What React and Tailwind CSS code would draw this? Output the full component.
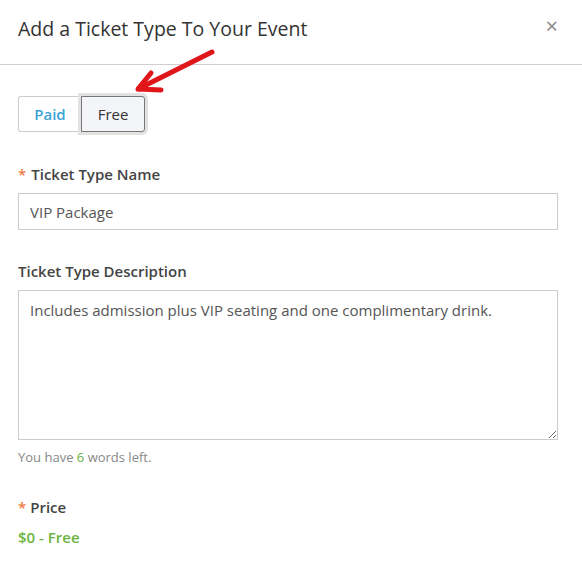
import { useState } from 'react'

export default function App() {
  const [type, setType] = useState('free')
  const [name, setName] = useState('VIP Package')
  const [desc, setDesc] = useState('Includes admission plus VIP seating and one complimentary drink.')

  return (
    <div className="relative w-[582px] h-[579px] bg-white text-[#333] font-['Open_Sans',sans-serif]">
      {/* header */}
      <div className="h-[65px] flex items-center justify-between pl-[18px] pr-[24px] border-b border-[#cfcfcf]">
        <h1 className="text-[19.5px] leading-[26px] text-[#333] -mt-[6px]">Add a Ticket Type To Your Event</h1>
        <button className="text-[22px] leading-none text-[#888] -mt-[14px]">×</button>
      </div>

      {/* pointer arrow */}
      <svg className="absolute left-[130px] top-[46px]" width="92" height="52" viewBox="0 0 92 52">
        <path d="M82 6 L14 40" stroke="#e0161b" strokeWidth="5" strokeLinecap="round" fill="none" />
        <path d="M8 43 L21 27 M8 43 L31 44" stroke="#e0161b" strokeWidth="5" strokeLinecap="round" fill="none" />
      </svg>

      <div className="px-[18px] pt-[31px]">
        {/* paid / free toggle */}
        <div className="flex">
          <button onClick={() => setType('paid')}
            className="w-[63px] h-[36px] rounded-l-[3px] border border-r-0 border-[#ccc] bg-white text-[15px] font-semibold text-[#3aa3d6]">
            Paid
          </button>
          <button onClick={() => setType('free')}
            className="w-[64px] h-[36px] rounded-r-[3px] border border-[#777] bg-[#f3f5f8] text-[15px] text-[#333] shadow-[0_0_0_3px_#e2e2e2]">
            Free
          </button>
        </div>

        {/* name */}
        <label className="block mt-[32px] text-[15px] leading-[20px] font-semibold text-[#444]">
          <span className="text-[#f07a3e] mr-[5px]">*</span>Ticket Type Name
        </label>
        <input value={name} onChange={e => setName(e.target.value)}
          className="mt-[9px] w-[540px] h-[37px] px-[11px] border border-[#ccc] text-[15px] text-[#555] outline-none" />

        {/* description */}
        <label className="block mt-[31px] text-[15px] leading-[20px] font-semibold text-[#444]">
          Ticket Type Description
        </label>
        <textarea value={desc} onChange={e => setDesc(e.target.value)}
          className="block mt-[9px] w-[540px] h-[150px] px-[11px] py-[9px] border border-[#ccc] text-[15px] leading-[20px] text-[#555] outline-none resize-y" />
        <p className="mt-[8px] text-[13px] leading-[18px] text-[#888]">
          You have <span className="text-[#6cb33f]">6</span> words left.
        </p>

        {/* price */}
        <label className="block mt-[31px] text-[15px] leading-[20px] font-semibold text-[#444]">
          <span className="text-[#f07a3e] mr-[4px]">*</span>Price
        </label>
        <p className="mt-[10px] text-[15px] leading-[20px] font-semibold text-[#6cb33f]">
          {type === 'free' ? '$0 - Free' : '$0 - Free'}
        </p>
      </div>
    </div>
  )
}
